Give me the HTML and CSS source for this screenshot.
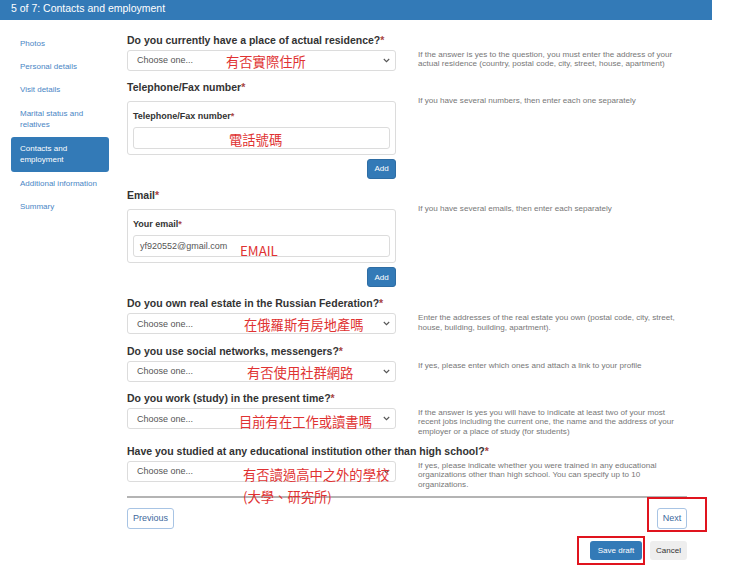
FILE: index.html
```html
<!DOCTYPE html>
<html lang="en">
<head>
<meta charset="utf-8">
<title>5 of 7: Contacts and employment</title>
<link rel="stylesheet" href="styles.css">
</head>
<body>
<header class="topbar">5 of 7: Contacts and employment</header>
<div class="layout">
  <nav class="steps">
    <a class="step">Photos</a>
    <a class="step">Personal details</a>
    <a class="step">Visit details</a>
    <a class="step">Marital status and relatives</a>
    <a class="step active">Contacts and employment</a>
    <a class="step">Additional information</a>
    <a class="step">Summary</a>
  </nav>
  <main class="form">
    <section class="q">
      <div class="q-label">Do you currently have a place of actual residence?<span class="req">*</span></div>
      <div class="q-row">
        <div class="field">
          <div class="select"><span>Choose one...</span><svg class="chev" width="7" height="5" viewBox="0 0 7 5"><path d="M0.8 1 L3.5 3.7 L6.2 1" fill="none" stroke="#555" stroke-width="1.1"/></svg></div>
        </div>
        <p class="help">If the answer is yes to the question, you must enter the address of your actual residence (country, postal code, city, street, house, apartment)</p>
      </div>
    </section>

    <section class="q">
      <div class="q-label to-panel">Telephone/Fax number<span class="req">*</span></div>
      <div class="q-row">
        <div class="field">
          <div class="panel">
            <div class="panel-label">Telephone/Fax number<span class="req">*</span></div>
            <div class="input"></div>
          </div>
          <div class="actions"><span class="btn-add">Add</span></div>
        </div>
        <p class="help up">If you have several numbers, then enter each one separately</p>
      </div>
    </section>

    <section class="q">
      <div class="q-label to-panel">Email<span class="req">*</span></div>
      <div class="q-row">
        <div class="field">
          <div class="panel">
            <div class="panel-label">Your email<span class="req">*</span></div>
            <div class="input">yf920552@gmail.com</div>
          </div>
          <div class="actions"><span class="btn-add">Add</span></div>
        </div>
        <p class="help up">If you have several emails, then enter each separately</p>
      </div>
    </section>

    <section class="q">
      <div class="q-label">Do you own real estate in the Russian Federation?<span class="req">*</span></div>
      <div class="q-row">
        <div class="field">
          <div class="select"><span>Choose one...</span><svg class="chev" width="7" height="5" viewBox="0 0 7 5"><path d="M0.8 1 L3.5 3.7 L6.2 1" fill="none" stroke="#555" stroke-width="1.1"/></svg></div>
        </div>
        <p class="help">Enter the addresses of the real estate you own (postal code, city, street, house, building, building, apartment).</p>
      </div>
    </section>

    <section class="q">
      <div class="q-label">Do you use social networks, messengers?<span class="req">*</span></div>
      <div class="q-row">
        <div class="field">
          <div class="select"><span>Choose one...</span><svg class="chev" width="7" height="5" viewBox="0 0 7 5"><path d="M0.8 1 L3.5 3.7 L6.2 1" fill="none" stroke="#555" stroke-width="1.1"/></svg></div>
        </div>
        <p class="help">If yes, please enter which ones and attach a link to your profile</p>
      </div>
    </section>

    <section class="q">
      <div class="q-label">Do you work (study) in the present time?<span class="req">*</span></div>
      <div class="q-row">
        <div class="field">
          <div class="select"><span>Choose one...</span><svg class="chev" width="7" height="5" viewBox="0 0 7 5"><path d="M0.8 1 L3.5 3.7 L6.2 1" fill="none" stroke="#555" stroke-width="1.1"/></svg></div>
        </div>
        <p class="help">If the answer is yes you will have to indicate at least two of your most recent jobs including the current one, the name and the address of your employer or a place of study (for students)</p>
      </div>
    </section>

    <section class="q tight">
      <div class="q-label">Have you studied at any educational institution other than high school?<span class="req">*</span></div>
      <div class="q-row">
        <div class="field">
          <div class="select"><span>Choose one...</span><svg class="chev" width="7" height="5" viewBox="0 0 7 5"><path d="M0.8 1 L3.5 3.7 L6.2 1" fill="none" stroke="#555" stroke-width="1.1"/></svg></div>
        </div>
        <p class="help">If yes, please indicate whether you were trained in any educational organizations other than high school. You can specify up to 10 organizations.</p>
      </div>
    </section>

    <div class="divider"></div>
    <div class="nav-row">
      <span class="btn-outline btn-prev">Previous</span>
      <span class="btn-outline btn-next">Next</span>
    </div>
    <div class="save-row">
      <span class="btn-save">Save draft</span>
      <span class="btn-cancel">Cancel</span>
    </div>
  </main>
</div>

<div class="annot a1">有否實際住所</div>
<div class="annot a2">電話號碼</div>
<div class="annot a3">EMAIL</div>
<div class="annot a4">在俄羅斯有房地產嗎</div>
<div class="annot a5">有否使用社群網路</div>
<div class="annot a6">目前有在工作或讀書嗎</div>
<div class="annot a7">有否讀過高中之外的學校</div>
<div class="annot a8">(大學、研究所)</div>
<div class="mark mark-next"></div>
<div class="mark mark-save"></div>
</body>
</html>
```

FILE: styles.css
```css
* { box-sizing: border-box; }

body {
  margin: 0;
  position: relative;
  width: 740px;
  height: 567px;
  overflow: hidden;
  background: #fff;
  color: #333;
  font-family: "Liberation Sans", Arial, sans-serif;
}

.topbar {
  width: 712px;
  height: 20px;
  background: #337ab7;
  color: #fff;
  font-size: 10.5px;
  line-height: 14px;
  padding: 1px 0 0 11px;
}

.layout {
  display: flex;
  align-items: flex-start;
  padding-top: 12px;
}

.steps {
  margin-left: 11px;
  width: 98px;
  display: flex;
  flex-direction: column;
}

.step {
  font-size: 8px;
  line-height: 11.7px;
  padding: 5.8px 9px;
  color: #4a86c5;
  border-radius: 3px;
}

.step.active {
  background: #337ab7;
  color: #fff;
}

.form {
  margin-left: 18px;
  width: 560px;
  padding-top: 0.5px;
}

.q { margin-top: 9.4px; }
.q:first-child { margin-top: 0; }
.q.tight { margin-top: 8px; }

.q-label {
  font-size: 10.5px;
  font-weight: bold;
  line-height: 14px;
  white-space: nowrap;
  margin-bottom: 3px;
}

.q-label.to-panel { margin-bottom: 6.7px; }

.req { color: #a94442; }

.q-row {
  display: grid;
  grid-template-columns: 269px 262px;
  column-gap: 22px;
  align-items: start;
}

.select {
  height: 21px;
  border: 1px solid #dcdcdc;
  border-radius: 3px;
  display: flex;
  align-items: center;
  justify-content: space-between;
  padding: 0 5px 0 9px;
  font-size: 9px;
  color: #555;
}

.chev { display: block; }

.help {
  margin: 0;
  font-size: 8.1px;
  line-height: 9.3px;
  color: #777;
}

.help.up { margin-top: -5px; }

.panel {
  border: 1px solid #dcdcdc;
  border-radius: 3px;
  padding: 8px 5px 5px 5px;
}

.panel-label {
  font-size: 9px;
  font-weight: bold;
  line-height: 12px;
  margin-bottom: 5px;
}

.input {
  height: 22px;
  border: 1px solid #dcdcdc;
  border-radius: 3px;
  display: flex;
  align-items: center;
  padding-left: 6px;
  font-size: 9px;
  color: #555;
}

.actions {
  display: flex;
  justify-content: flex-end;
  margin-top: 4.6px;
}

.btn-add {
  width: 29px;
  height: 19.5px;
  border-radius: 3px;
  background: #337ab7;
  border: 1px solid #2e6da4;
  color: #fff;
  font-size: 8px;
  display: flex;
  align-items: center;
  justify-content: center;
}

.divider {
  height: 2px;
  background: #b4b4b4;
  margin-top: 7.5px;
}

.nav-row {
  display: flex;
  justify-content: space-between;
  margin-top: 9.5px;
}

.btn-outline {
  height: 21px;
  border: 1px solid #a8c4e4;
  border-radius: 3px;
  background: #fff;
  color: #41699d;
  font-size: 9px;
  display: flex;
  align-items: center;
  justify-content: center;
}

.btn-prev { width: 47px; }
.btn-next { width: 30px; }

.save-row {
  display: flex;
  justify-content: flex-end;
  gap: 8px;
  margin-top: 12px;
}

.btn-save {
  width: 52px;
  height: 19.5px;
  border-radius: 3px;
  background: #337ab7;
  color: #fff;
  font-size: 8px;
  display: flex;
  align-items: center;
  justify-content: center;
}

.btn-cancel {
  width: 37px;
  height: 19.5px;
  border-radius: 3px;
  background: #eee;
  color: #333;
  font-size: 8px;
  display: flex;
  align-items: center;
  justify-content: center;
}

.annot {
  position: absolute;
  font-family: "Noto Sans CJK TC", "Noto Sans CJK SC", sans-serif;
  font-size: 13.3px;
  line-height: 1;
  color: #e03232;
  white-space: nowrap;
}

.a1 { left: 226px; top: 55px; }
.a2 { left: 229px; top: 132.5px; }
.a3 { left: 240px; top: 244px; }
.a4 { left: 244px; top: 317.5px; }
.a5 { left: 247px; top: 365.5px; }
.a6 { left: 239px; top: 414.5px; }
.a7 { left: 243px; top: 467.5px; }
.a8 { left: 243px; top: 489.5px; }

.mark {
  position: absolute;
  border: 2px solid #e0141e;
}

.mark-next { left: 647px; top: 497px; width: 60px; height: 35px; }
.mark-save { left: 577px; top: 536px; width: 68px; height: 29px; }
```
